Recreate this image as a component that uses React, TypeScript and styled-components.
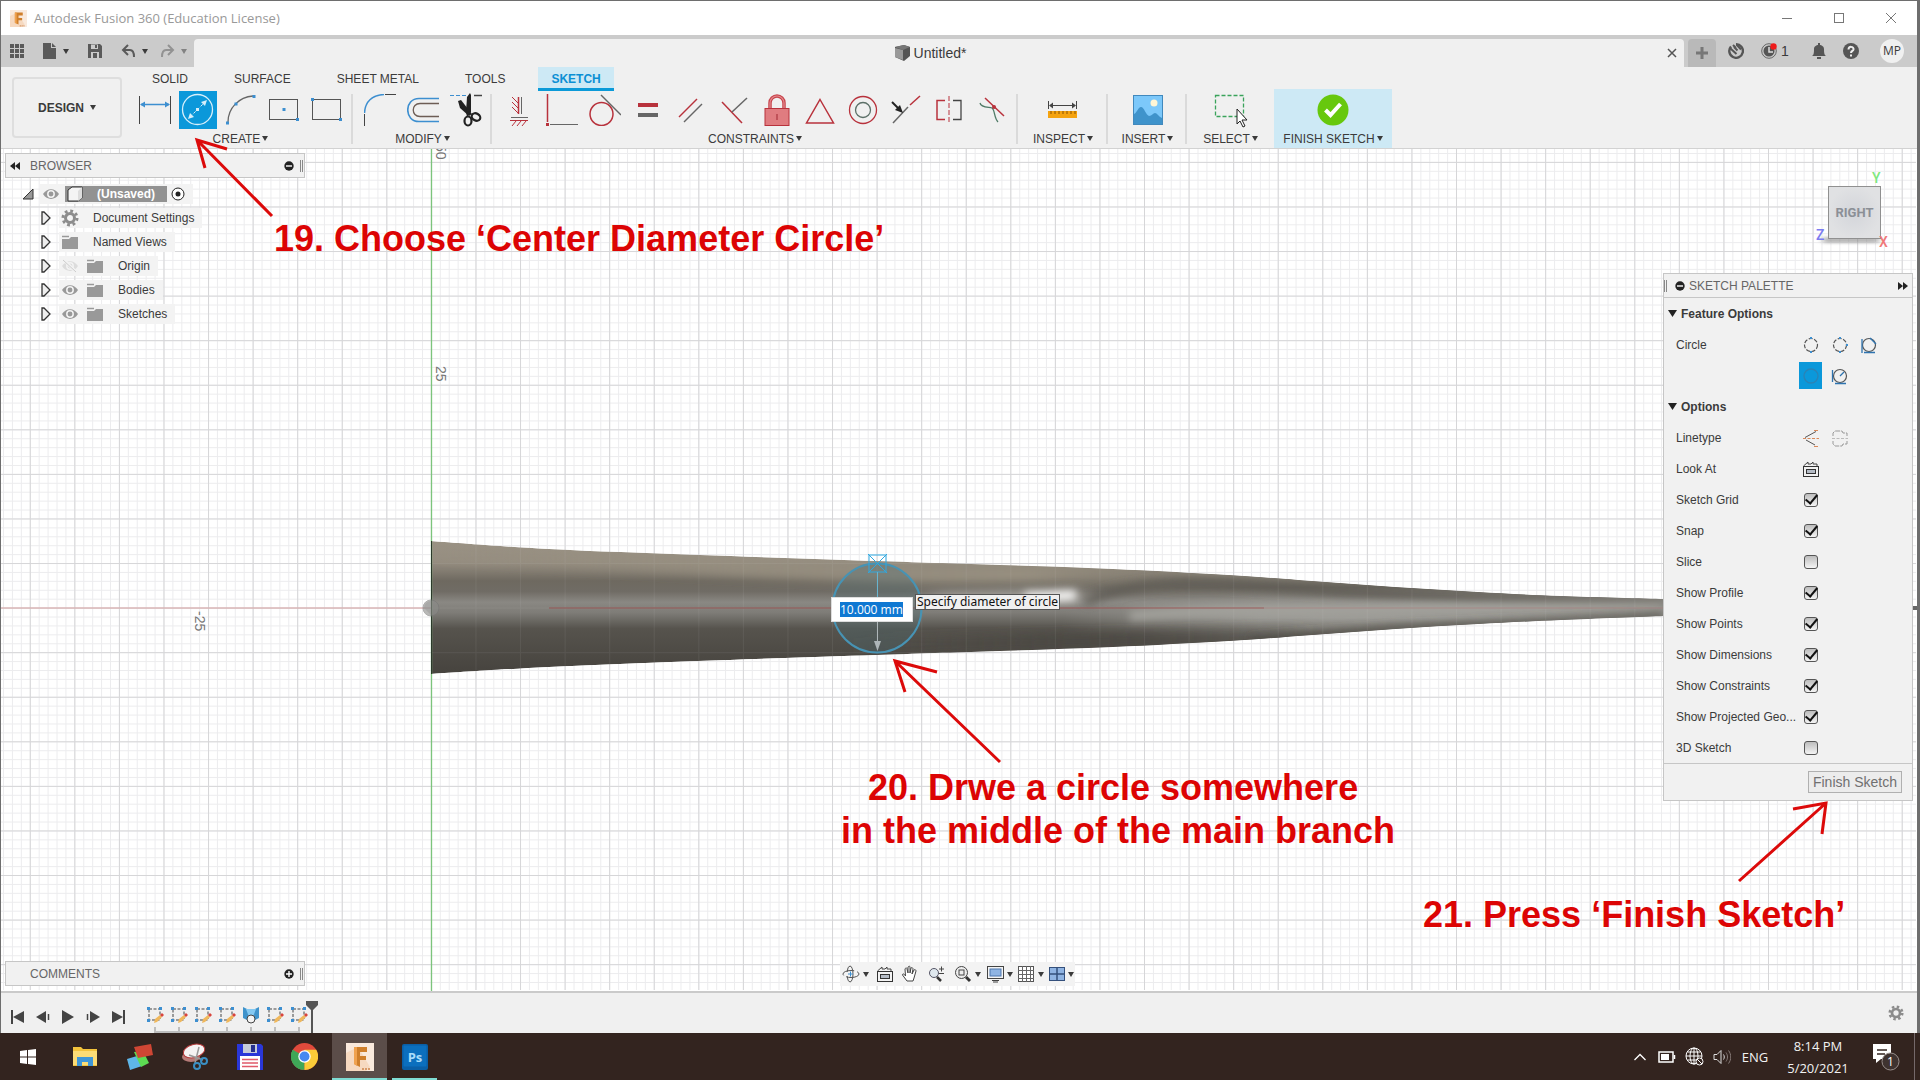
import React from "react";
import styled, { createGlobalStyle, css } from "styled-components";

const sans = `"Liberation Sans", Arial, sans-serif`;
const humanist = `"Open Sans", "Noto Sans", sans-serif`;

const GlobalStyle = createGlobalStyle`
  * { box-sizing: border-box; }
  body { margin: 0; background: #33241f; font: 12px/16px ${sans}; color: #3b3b3b; }
  button { font: inherit; color: inherit; background: none; border: 0; padding: 0; margin: 0; }
  svg { display: block; flex: none; }
`;

const Desktop = styled.div`
  position: relative;
  min-height: 100vh;
  display: flex;
  flex-direction: column;
  overflow: hidden;
`;

const AppWindow = styled.div`
  flex: 1;
  display: flex;
  flex-direction: column;
  border: solid #6e6e6e;
  border-width: 1px 3px 0 1px;
`;

/* ---------- title bar ---------- */
const TitleBar = styled.header`
  display: flex;
  align-items: center;
  height: 34px;
  padding: 0 0 0 9px;
  background: #fff;
  color: #999;
  font: 13px/18px ${humanist};
`;
const AppTitle = styled.h1`
  flex: 1;
  margin: 0 0 0 7px;
  font: inherit;
`;
const WindowButton = styled.button`
  width: 52px;
  height: 34px;
  display: grid;
  place-items: center;
`;

/* ---------- document tabs ---------- */
const TabStrip = styled.div`
  display: flex;
  align-items: stretch;
  height: 32px;
  background: #cbcbcb;
`;
const QuickAccess = styled.div`
  width: 193px;
  display: flex;
  align-items: center;
  padding-left: 8px;
`;
const QuickButton = styled.button<{ $w: number; $faded?: boolean }>`
  width: ${(p) => p.$w}px;
  height: 32px;
  display: flex;
  align-items: center;
  gap: 6px;
  opacity: ${(p) => (p.$faded ? 0.5 : 1)};
`;
const DocumentTab = styled.div`
  flex: 1;
  margin-top: 4px;
  display: flex;
  align-items: center;
  background: #f0f0f0;
  border-radius: 4px 4px 0 0;
  padding-right: 6px;
`;
const DocumentName = styled.div`
  flex: 1;
  display: flex;
  align-items: center;
  justify-content: center;
  gap: 4px;
  font-size: 14px;
`;
const SmallButton = styled.button`
  width: 12px;
  height: 20px;
  display: grid;
  place-items: center;
`;
const NewTab = styled.button`
  width: 28px;
  margin: 4px 12px 0 4px;
  border-radius: 4px 4px 0 0;
  background: #b9b9b9;
  display: grid;
  place-items: center;
`;
const AccountTools = styled.div`
  width: 189px;
  display: flex;
  align-items: center;
  font-size: 14px;
`;
const ToolSlot = styled.button<{ $w: number }>`
  width: ${(p) => p.$w}px;
  display: flex;
  gap: 4px;
  align-items: center;
`;
const Avatar = styled.button`
  width: 24px;
  height: 24px;
  border-radius: 50%;
  background: #f0f0f0;
  font: 12px/24px ${humanist};
`;

/* ---------- ribbon ---------- */
const Ribbon = styled.div`
  display: flex;
  height: 82px;
  background: #f0f0f0;
  border-bottom: 1px solid #d2d2d2;
`;
const DesignButton = styled.button`
  width: 110px;
  height: 61px;
  margin: 10px 6px 0 11px;
  border: 2px solid #dedede;
  border-radius: 4px;
  display: flex;
  align-items: center;
  justify-content: center;
  gap: 6px;
  font-weight: bold;
`;
const RibbonBody = styled.div`
  flex: 1;
`;
const WorkspaceTabs = styled.nav`
  display: flex;
  gap: 20px;
  padding-left: 11px;
`;
const WorkspaceTab = styled.button<{ $active?: boolean }>`
  height: 24px;
  padding: 0 13px;
  ${(p) =>
    p.$active &&
    css`
      background: #cde9f5;
      color: #0b8fd4;
      font-weight: bold;
      border-bottom: 3px solid #0b9ad8;
      padding-top: 2px;
    `}
`;
const ToolGroups = styled.div`
  display: flex;
`;
const Group = styled.div<{ $w?: number; $plain?: boolean }>`
  height: 57px;
  width: ${(p) => (p.$w ? p.$w + "px" : "auto")};
  padding: 0 5px;
  position: relative;
  display: flex;
  flex-direction: column;
  align-items: center;
  &::after {
    content: "";
    position: absolute;
    right: 0;
    top: 3px;
    bottom: 4px;
    width: 2px;
    background: ${(p) => (p.$plain ? "transparent" : "#dadada")};
  }
`;
const FinishGroup = styled(Group)`
  height: 59px;
  margin-top: -2px;
  padding-top: 2px;
  background: #cde9f5;
`;
const IconRow = styled.div`
  display: flex;
`;
const Tool = styled.button`
  width: 43px;
  height: 38px;
  display: grid;
  place-items: center;
`;
const GroupLabel = styled.button`
  display: flex;
  align-items: center;
  gap: 2px;
  height: 19px;
  white-space: nowrap;
`;
const Caret = styled.span`
  width: 0;
  height: 0;
  border: solid transparent;
  border-width: 5px 3px 0;
  border-top-color: #3b3b3b;
`;

/* ---------- canvas ---------- */
const Canvas = styled.main`
  position: relative;
  flex: 1;
  min-height: 842px;
  background: #fff;
  display: flex;
  justify-content: space-between;
`;
const Scene = styled.svg`
  position: absolute;
  inset: 0;
  width: 100%;
  height: 100%;
`;
const LeftDock = styled.aside`
  position: relative;
  width: 300px;
  margin: 4px 0 5px 4px;
  display: flex;
  flex-direction: column;
`;
const PanelBar = styled.div`
  display: flex;
  align-items: center;
  height: 25px;
  padding: 0 1px 0 4px;
  background: #f1f1f1;
  border: 1px solid #c6c6c6;
  color: #666;
`;
const PanelTitle = styled.h2<{ $indent: number }>`
  flex: 1;
  margin: 0 0 0 ${(p) => p.$indent}px;
  font: inherit;
`;
const Grip = styled.span<{ $gap?: number }>`
  width: 3px;
  height: 12px;
  border: solid #888;
  border-width: 0 1px;
  margin-left: ${(p) => p.$gap ?? 0}px;
`;
const Tree = styled.ul`
  list-style: none;
  flex: 1;
  margin: 4px 0 0;
  padding: 0;
`;
const Node = styled.li<{ $indent: number; $gap: number }>`
  height: 24px;
  display: flex;
  align-items: center;
  padding-left: ${(p) => p.$indent}px;
  gap: ${(p) => p.$gap}px;
`;
const NodeBody = styled.span`
  height: 20px;
  padding: 0 8px 0 2px;
  display: flex;
  align-items: center;
  background: #f3f3f3;
`;
const NodeIcon = styled.span<{ $w?: number }>`
  width: ${(p) => p.$w ?? 25}px;
  display: flex;
`;
const NodeText = styled.span`
  padding-left: 7px;
`;
const RootName = styled.span`
  display: flex;
  align-items: center;
  width: 102px;
  height: 16px;
  margin-right: 4px;
  padding-left: 2px;
  gap: 14px;
  background: #929292;
  color: #fff;
  font-weight: bold;
`;

const NavBar = styled.div`
  position: absolute;
  left: 50%;
  bottom: 5px;
  margin-left: -119px;
  display: flex;
  align-items: center;
  height: 24px;
  padding-left: 2px;
  background: #f3f3f3;
`;
const NavButton = styled.button<{ $w: number }>`
  width: ${(p) => p.$w}px;
  display: flex;
  align-items: center;
  gap: 3px;
`;

const RightDock = styled.aside`
  position: relative;
  width: 250px;
  margin: 11px 4px 0 0;
  display: flex;
  flex-direction: column;
  align-items: flex-end;
`;
const ViewCube = styled.svg`
  margin: 0 16px 20px 0;
`;
const Palette = styled.section`
  width: 100%;
  background: #f1f1f1;
  border: 1px solid #c6c6c6;
`;
const PaletteHead = styled.div`
  height: 24px;
  display: flex;
  align-items: center;
  padding-right: 4px;
  border-bottom: 1px solid #c6c6c6;
  color: #666;
`;
const PaletteMark = styled.span`
  margin: 0 4px 0 8px;
`;
const PaletteSection = styled.h3`
  height: 31px;
  margin: 0;
  padding-left: 4px;
  display: flex;
  align-items: center;
  gap: 4px;
  font: bold 12px/16px ${sans};
`;
const PaletteRow = styled.div`
  height: 31px;
  display: flex;
  align-items: center;
  padding-left: 12px;
`;
const PaletteLabel = styled.label`
  width: 123px;
  flex: none;
  white-space: nowrap;
`;
const PaletteTool = styled.button<{ $on?: boolean }>`
  width: 23px;
  height: 27px;
  margin-right: 6px;
  display: grid;
  place-items: center;
  background: ${(p) => (p.$on ? "#0b98da" : "transparent")};
`;
const Check = styled.input`
  appearance: none;
  width: 14px;
  height: 14px;
  margin: 0 0 0 5px;
  border: 1px solid #555;
  border-radius: 3px;
  background: linear-gradient(#bdbdbd, #f4f4f4);
  display: grid;
  place-items: center;
  &:checked::after {
    content: "";
    width: 5px;
    height: 10px;
    margin-top: -3px;
    border: solid #111;
    border-width: 0 2px 2px 0;
    transform: rotate(40deg);
  }
`;
const PaletteFoot = styled.div`
  height: 37px;
  padding-right: 10px;
  display: flex;
  align-items: center;
  justify-content: flex-end;
  border-top: 1px solid #c6c6c6;
`;
const FinishButton = styled.button`
  height: 22px;
  padding: 0 4px;
  border: 1px solid #b0b0b0;
  background: #ececec;
  color: #707070;
  font-size: 14px;
`;

const DiameterBox = styled.label`
  position: absolute;
  left: 830px;
  top: 448px;
  padding: 4px 9px 4px 8px;
  background: #fff;
  border: 1px solid #ddd;
  display: flex;
`;
const DiameterInput = styled.input`
  width: 63px;
  height: 15px;
  padding: 0;
  border: 0;
  background: #0f78d2;
  color: #fff;
  font: 12px/15px ${humanist};
`;
const Tip = styled.div`
  position: absolute;
  left: 914px;
  top: 445px;
  height: 16px;
  padding: 0 1px;
  border: 1px solid #555;
  background: #f0f0f0;
  color: #111;
  font: 12px/14px "Noto Sans", sans-serif;
  white-space: nowrap;
`;
const Note = styled.p<{ $x: number; $y: number }>`
  position: absolute;
  left: ${(p) => p.$x}px;
  top: ${(p) => p.$y}px;
  margin: 0;
  color: #dc0404;
  font: bold 36px/43px ${sans};
  text-align: center;
  white-space: nowrap;
`;
const Arrows = styled.svg`
  position: absolute;
  inset: 0;
  width: 100%;
  height: 100%;
  pointer-events: none;
`;

/* ---------- timeline ---------- */
const Timeline = styled.footer`
  display: flex;
  align-items: center;
  height: 42px;
  padding: 0 13px 0 4px;
  background: #f0f0f0;
  border-top: 2px solid #cacaca;
`;
const PlayButton = styled.button`
  width: 25px;
  height: 30px;
  margin-top: 7px;
  display: grid;
  place-items: center;
`;
const Features = styled.div`
  flex: 1;
  display: flex;
  align-self: flex-end;
  align-items: flex-end;
  margin-left: 13px;
`;
const Feature = styled.button<{ $first?: boolean; $last?: boolean }>`
  width: 24px;
  height: 27px;
  display: flex;
  flex-direction: column;
  align-items: center;
  justify-content: space-between;
  background: linear-gradient(#bdbdbd, #bdbdbd) no-repeat ${(p) => (p.$first ? "right" : "left")} bottom /
    ${(p) => (p.$first || p.$last ? "12px" : "24px")} 2px;
`;
const Tick = styled.span`
  width: 2px;
  height: 6px;
  background: #bdbdbd;
`;
const Marker = styled.svg`
  margin-left: -5px;
`;

/* ---------- taskbar ---------- */
const Taskbar = styled.div`
  height: 47px;
  display: flex;
  background: #33241f;
  color: #f2f2f2;
  font: 14px/22px ${humanist};
`;
const TaskButton = styled.button<{ $w?: number; $active?: boolean }>`
  width: ${(p) => p.$w ?? 55}px;
  height: 47px;
  display: grid;
  place-items: center;
  background: ${(p) => (p.$active ? "#5b4d49" : "transparent")};
`;
const RunningButton = styled(TaskButton)<{ $inset: number }>`
  position: relative;
  &::after {
    content: "";
    position: absolute;
    left: ${(p) => p.$inset}px;
    right: ${(p) => p.$inset}px;
    bottom: 0;
    height: 2px;
    background: #7fdcd3;
  }
`;
const Tray = styled.div`
  margin-left: auto;
  display: flex;
  align-items: center;
  padding-right: 5px;
`;
const TrayIcon = styled.button<{ $w: number }>`
  width: ${(p) => p.$w}px;
  display: grid;
  place-items: center;
`;
const Language = styled.button`
  width: 40px;
  font: 13px/22px ${humanist};
`;
const Clock = styled.time`
  width: 86px;
  text-align: center;
  font: 13px/22px ${humanist};
`;
const ShowDesktop = styled.button`
  width: 1px;
  height: 47px;
  margin-left: 3px;
  background: #75696a;
`;

/* ---------- drawings ---------- */
const R = "#b8323c";
const G = "#666";
const B = "#3d8fd0";

type IconProps = { w?: number; h?: number; children: React.ReactNode };
const Icon = ({ w = 32, h = 32, children }: IconProps) => (
  <svg width={w} height={h} viewBox={`0 0 ${w} ${h}`} fill="none">
    {children}
  </svg>
);

const FusionLogo = ({ size }: { size: number }) => (
  <svg width={size} height={size} viewBox="0 0 28 28">
    <rect width="28" height="28" fill="#f9e9dc" />
    <path d="M0 28V10l12-6 12 20-4 4z" fill="#f3cfae" opacity=".6" />
    <path d="M8 4h13v5h-7v4h6v4h-6v7l-6-3z" fill="#cf7f2b" />
    <path d="M8 4h3v19l-3-2z" fill="#f0a24f" />
    <path d="M16 26h9" stroke="#d79a6a" strokeWidth="2" strokeDasharray="2 1" />
  </svg>
);

const dot = (x: number, y: number) => <rect x={x - 1.5} y={y - 1.5} width="3" height="3" fill={B} />;

const createTools: [string, React.ReactNode][] = [
  ["Sketch Dimension", <Icon key="i"><path d="M.5 2v28M31.500 2v28" stroke="#444" /><path d="M2 10.500h28" stroke={B} strokeWidth="1.500" /><path d="M1 10.500l5-3v6zM31 10.500l-5-3v6z" fill={B} /></Icon>],
  ["Center Diameter Circle", <Icon key="i" w={38} h={38}><rect width="38" height="38" fill="#0b98da" /><circle cx="18.500" cy="18.500" r="15" stroke="#d5eefa" strokeWidth="1.300" /><path d="M11 26L26 11" stroke="#d5eefa" strokeDasharray="3 2" /><path d="M9 28l2-6 4 4zM28 9l-2 6-4-4z" fill="#d5eefa" /><rect x="17" y="17" width="3" height="3" fill="#d5eefa" /></Icon>],
  ["3-Point Arc", <Icon key="i"><path d="M3 28C3 14 14 3 28 2" stroke="#666" strokeWidth="1.300" />{dot(2.500, 29)}{dot(11, 10)}{dot(29, 2.500)}</Icon>],
  ["Center Rectangle", <Icon key="i"><rect x="1.500" y="5.500" width="28" height="20" stroke="#555" />{dot(16, 15.500)}{dot(29.500, 25.500)}</Icon>],
  ["2-Point Rectangle", <Icon key="i"><rect x="1.500" y="5.500" width="28" height="20" stroke="#555" />{dot(1.500, 5.500)}{dot(29.500, 25.500)}</Icon>],
];

const modifyTools: [string, React.ReactNode][] = [
  ["Fillet", <Icon key="i"><path d="M.5 32V20" stroke="#444" /><path d="M.5 19C1 8 8 1 20 .5" stroke={B} strokeWidth="1.500" /><path d="M21 .5h11" stroke="#444" /></Icon>],
  ["Offset", <Icon key="i"><path d="M32 4.500H12C-3 4.500-3 27.500 12 27.500H32" stroke={B} strokeWidth="1.600" /><path d="M32 9.500H13c-9 0-9 13 0 13h19" stroke="#6d5d55" strokeWidth="1.300" /></Icon>],
  ["Trim", <Icon key="i" h={34}><path d="M0 2.500h16" stroke={B} strokeDasharray="4 2" /><path d="M24 2.500h8" stroke="#444" strokeWidth="1.500" /><path d="M8 8l3-1 11 14-3 2-9-8z" fill="#222" /><path d="M17 4l3-4 1 2v17l-4 5-1-5z" fill="#222" /><ellipse cx="18" cy="28" rx="3.500" ry="4.500" stroke="#222" strokeWidth="2.200" fill="#f0f0f0" /><ellipse cx="26" cy="24" rx="4.500" ry="3.500" stroke="#222" strokeWidth="2.200" fill="#f0f0f0" transform="rotate(30 26 24)" /></Icon>],
];

const constraintTools: [string, React.ReactNode][] = [
  ["Horizontal/Vertical", <Icon key="i"><path d="M15.500 3v17" stroke={R} strokeWidth="1.500" /><path d="M18.500 3v17M8 23.500h17" stroke={G} /><path d="M9 3l6 6M9 8l6 6M9 13l6 6M7 26.500h18M13 27l-4 5M18 27l-4 5M23 27l-4 5" stroke={R} /></Icon>],
  ["Coincident", <Icon key="i"><path d="M1.500 0v28" stroke={R} strokeWidth="1.500" /><path d="M4 30.500h28" stroke={G} /><rect y="29" width="3" height="3" fill={R} /></Icon>],
  ["Tangent", <Icon key="i"><circle cx="12.500" cy="20" r="11.500" stroke={R} strokeWidth="1.500" /><path d="M12 1l20 20" stroke={G} strokeWidth="1.500" /></Icon>],
  ["Equal", <Icon key="i"><path d="M6 11h20" stroke={R} strokeWidth="4" /><path d="M6 21h20" stroke={G} strokeWidth="4" /></Icon>],
  ["Parallel", <Icon key="i"><path d="M4 23L22 5" stroke={R} strokeWidth="1.500" /><path d="M9 28L27 10" stroke={G} strokeWidth="1.500" /></Icon>],
  ["Perpendicular", <Icon key="i"><path d="M4 8l20 21" stroke={R} strokeWidth="1.500" /><path d="M14 18L29 4" stroke={G} strokeWidth="1.500" /></Icon>],
  ["Fix/Unfix", <Icon key="i"><path d="M9 15V9a7 7 0 0114 0v6" stroke="#c8454d" strokeWidth="3.500" /><path d="M9 15V9a7 7 0 0114 0v6" stroke="#e58c90" strokeWidth="1.200" /><rect x="4" y="14.500" width="24" height="17" fill="#e07c80" stroke="#b8323c" /><path d="M16 20v6" stroke="#a02832" /></Icon>],
  ["MidPoint", <Icon key="i"><path d="M16 5.500L29.500 29h-27z" stroke={R} strokeWidth="1.500" /></Icon>],
  ["Concentric", <Icon key="i"><circle cx="16" cy="16" r="13.500" stroke={R} strokeWidth="1.300" /><circle cx="16" cy="16" r="7.500" stroke="#5c7068" strokeWidth="1.300" /></Icon>],
  ["Collinear", <Icon key="i"><path d="M3 29l15-16" stroke={G} strokeWidth="1.500" /><path d="M20 11L30 2" stroke={R} strokeWidth="1.500" /><path d="M2 8l8 8" stroke="#222" strokeWidth="2" /><path d="M13 19l-8-3 5-5z" fill="#222" /></Icon>],
  ["Symmetry", <Icon key="i"><path d="M12 6.500H4v19h8" stroke={R} strokeWidth="1.500" /><path d="M20 6.500h8v19h-8" stroke="#444" strokeWidth="1.300" /><path d="M16 2v28" stroke={R} strokeDasharray="5 2" /></Icon>],
  ["Curvature", <Icon key="i"><path d="M9 4l19 18" stroke={R} strokeWidth="1.500" /><path d="M4 9c1 5 9 4 12 5 3 2 2 10 6 14" stroke="#4f7a66" strokeWidth="1.300" /><circle cx="18" cy="13" r="2" fill={R} /></Icon>],
];

const InspectIcon = () => (
  <Icon><path d="M1.500 7v8M29.500 7v8M3 11.500h25" stroke="#444" /><path d="M2 11.500l4-3v6zM29 11.500l-4-3v6z" fill="#444" /><rect x="1" y="17" width="29" height="7" fill="#f5a30f" /><path d="M4 17v3M8 17v3M12 17v3M16 17v3M20 17v3M24 17v3M28 17v3" stroke="#8a5200" /></Icon>
);
const InsertIcon = () => (
  <Icon><rect x="1.500" y="1.500" width="29" height="29" fill="#7cc8fa" stroke="#4189bd" /><path d="M2 20c3-1 4-7 7-7s5 8 8 9c3 0 4-3 6-3s3 3 7 5v6H2z" fill="#3f93cb" /><circle cx="22" cy="9" r="3.500" fill="#fff6d6" /></Icon>
);
const SelectIcon = () => (
  <Icon w={36} h={36}><rect x="2.500" y="3.500" width="28" height="21" stroke="#3aa35b" strokeWidth="1.300" strokeDasharray="4 2" /><path d="M24 17v15l3-3 3 6 2-1-3-6h5z" fill="#fff" stroke="#222" /></Icon>
);
const FinishIcon = () => (
  <Icon><circle cx="16" cy="16" r="15.500" fill="#67c80d" /><path d="M8.500 16l5 5 10-11" stroke="#fff" strokeWidth="4" /></Icon>
);

const MenuLabel = ({ text }: { text: string }) => (
  <GroupLabel>
    {text}
    <Caret />
  </GroupLabel>
);

const Eye = ({ off }: { off?: boolean }) => (
  <Icon w={18} h={14}>
    <g opacity={off ? 0.25 : 1}>
      <path d="M1 7c4-6.500 12-6.500 16 0-4 6.500-12 6.500-16 0z" fill="#999" />
      <circle cx="9" cy="7" r="3.200" fill="#999" stroke="#f3f3f3" strokeWidth="1.500" />
    </g>
    {off && <path d="M3 1l12 12" stroke="#f3f3f3" strokeWidth="3" />}
    {off && <path d="M2 1l13 12" stroke="#ccc" />}
  </Icon>
);
const Folder = () => (
  <Icon w={18} h={14}><path d="M1 4h7l2-2h7v12H1z" fill="#999" /><path d="M1 1.500h7" stroke="#999" strokeWidth="1.500" /></Icon>
);
const Gear = ({ size = 18 }: { size?: number }) => (
  <svg width={size} height={size} viewBox="0 0 18 18" fill="none">
    <circle cx="9" cy="9" r="4.500" stroke="#8c8c8c" strokeWidth="3" />
    <circle cx="9" cy="9" r="7" stroke="#8c8c8c" strokeWidth="3" strokeDasharray="2.750 2.750" />
  </svg>
);
const Expander = () => (
  <Icon w={10} h={14}><path d="M1 1h2l6 6-6 6H1z" fill="#eee" stroke="#333" strokeWidth="1.300" /></Icon>
);
const RoundMark = ({ plus }: { plus?: boolean }) => (
  <Icon w={10} h={10}><circle cx="5" cy="5" r="4.700" fill="#222" /><path d={plus ? "M2 5h6M5 2v6" : "M2 5h6"} stroke="#fff" strokeWidth="1.400" /></Icon>
);
const DoubleArrow = ({ right }: { right?: boolean }) => (
  <Icon w={10} h={8}><path d={right ? "M0 0l5 4-5 4zM5 0l5 4-5 4z" : "M5 0L0 4l5 4zM10 0L5 4l5 4z"} fill="#222" /></Icon>
);
const LookAt = () => (
  <Icon w={18} h={18}><rect x="1.500" y="6.500" width="15" height="10" stroke="#333" /><rect x="4.500" y="9.500" width="9" height="4" fill="#b5bcc6" stroke="#333" /><path d="M1.500 6l4.500-4v2h3l2-2v2h4v2" stroke="#444" /></Icon>
);

const treeItems = [
  { name: "Document Settings", icons: [<Gear key="g" />] },
  { name: "Named Views", icons: [<Folder key="f" />] },
  { name: "Origin", icons: [<Eye key="e" off />, <Folder key="f" />] },
  { name: "Bodies", icons: [<Eye key="e" />, <Folder key="f" />] },
  { name: "Sketches", icons: [<Eye key="e" />, <Folder key="f" />] },
];

const paletteChecks: [string, boolean][] = [
  ["Sketch Grid", true],
  ["Snap", true],
  ["Slice", false],
  ["Show Profile", true],
  ["Show Points", true],
  ["Show Dimensions", true],
  ["Show Constraints", true],
  ["Show Projected Geo...", true],
  ["3D Sketch", false],
];

const SketchFeature = () => (
  <Icon w={18} h={18}><rect x="3" y="3" width="11" height="11" stroke="#444" strokeDasharray="3 1.500" /><path d="M1 1h3v3H1zM13 1h3v3h-3zM1 13h3v3H1z" fill={B} /><path d="M8 17l1-4 5-4 2 2-5 5z" fill="#f0b85c" /><path d="M14 9l2-2 2 2-2 2z" fill="#d8443c" /></Icon>
);
const LoftFeature = () => (
  <Icon w={18} h={18}><path d="M1 1l4 2h8l4-2v11l-4 2H5l-4-2z" fill="#3f93cb" /><path d="M4 3h10l-3 8H7z" fill="#84c9f2" /><circle cx="9" cy="13" r="4" fill="#f4f4f4" stroke="#444" /></Icon>
);

type Point = [number, number];

/* Catmull-Rom spline through the points, as cubic Bezier segments. */
const spline = (pts: Point[]) =>
  pts
    .slice(1)
    .map((p, i) => {
      const a = pts[i];
      const before = pts[i - 1] ?? a;
      const after = pts[i + 2] ?? p;
      return `C${a[0] + (p[0] - before[0]) / 6} ${a[1] + (p[1] - before[1]) / 6} ${p[0] - (after[0] - a[0]) / 6} ${
        p[1] - (after[1] - a[1]) / 6
      } ${p[0]} ${p[1]}`;
    })
    .join("");

const topEdge: Point[] = [[431, 541], [549, 549], [700, 555], [877, 561], [1000, 565], [1113, 569], [1229, 575], [1312, 581], [1395, 587], [1478, 592], [1561, 596], [1664, 599]];
const bottomEdge: Point[] = [[1664, 616], [1561, 620], [1478, 624], [1395, 629], [1312, 635], [1229, 641], [1113, 647], [1000, 651], [877, 655], [698, 661], [549, 667], [431, 674]];
const outline = `M431 541${spline(topEdge)}L1664 616${spline(bottomEdge)}Z`;

const CanvasScene = () => (
  <Scene aria-hidden="true">
    <defs>
      <pattern id="minor" width="8.914" height="8.914" patternUnits="userSpaceOnUse" x="430.900" y="607.600">
        <path d="M0 .5h8.914M.5 0v8.914" stroke="#ececee" />
      </pattern>
      <pattern id="major" width="44.570" height="44.570" patternUnits="userSpaceOnUse" x="430.900" y="607.600">
        <path d="M0 .5h44.570M.5 0v44.570" stroke="#d6d6d8" />
      </pattern>
      <linearGradient id="metal" x1="0" x2="0" y1="541" y2="674" gradientUnits="userSpaceOnUse">
        <stop offset="0" stopColor="#9a9284" />
        <stop offset=".16" stopColor="#958d80" />
        <stop offset=".3" stopColor="#6e6960" />
        <stop offset=".38" stopColor="#706c65" />
        <stop offset=".46" stopColor="#8a8883" />
        <stop offset=".54" stopColor="#7e7c77" />
        <stop offset=".66" stopColor="#56534d" />
        <stop offset="1" stopColor="#46433e" />
      </linearGradient>
      <linearGradient id="taper" x1="0" x2="0" y1="574" y2="641" gradientUnits="userSpaceOnUse">
        <stop offset="0" stopColor="#8b8579" />
        <stop offset=".2" stopColor="#6a665e" />
        <stop offset=".4" stopColor="#8f8d88" />
        <stop offset=".65" stopColor="#9b9a95" />
        <stop offset=".8" stopColor="#85837d" />
        <stop offset="1" stopColor="#5c5953" />
      </linearGradient>
      <linearGradient id="fade" x1="1060" x2="1260" y1="0" y2="0" gradientUnits="userSpaceOnUse">
        <stop offset="0" stopColor="#000" />
        <stop offset="1" stopColor="#fff" />
      </linearGradient>
      <linearGradient id="lightBand" x1="431" x2="1180" y1="0" y2="0" gradientUnits="userSpaceOnUse">
        <stop offset="0" stopColor="#978f80" stopOpacity="0" />
        <stop offset=".4" stopColor="#978f80" stopOpacity=".8" />
        <stop offset=".8" stopColor="#978f80" />
        <stop offset="1" stopColor="#978f80" stopOpacity="0" />
      </linearGradient>
      <linearGradient id="darkBand" x1="850" x2="1300" y1="0" y2="0" gradientUnits="userSpaceOnUse">
        <stop offset="0" stopColor="#4b4843" stopOpacity="0" />
        <stop offset=".5" stopColor="#4b4843" />
        <stop offset="1" stopColor="#4b4843" stopOpacity=".2" />
      </linearGradient>
      <mask id="taperMask" maskUnits="userSpaceOnUse" x="1000" y="520" width="700" height="180">
        <rect x="1000" y="520" width="700" height="180" fill="url(#fade)" />
      </mask>
      <filter id="soft" filterUnits="userSpaceOnUse" x="400" y="500" width="1300" height="220">
        <feGaussianBlur stdDeviation="4" />
      </filter>
      <filter id="softer" filterUnits="userSpaceOnUse" x="400" y="500" width="1300" height="220">
        <feGaussianBlur stdDeviation="12 5" />
      </filter>
      <clipPath id="body">
        <path d={outline} />
      </clipPath>
    </defs>
    <g transform="translate(-1 -149)">
      <rect x="0" y="148" width="100%" height="100%" fill="url(#minor)" />
      <rect x="0" y="148" width="100%" height="100%" fill="url(#major)" />
      <path d="M0 608h431" stroke="#d9a3a3" />
      <g clipPath="url(#body)">
        <path d={outline} fill="url(#metal)" />
        <path d={outline} fill="url(#taper)" mask="url(#taperMask)" />
        <path d="M431 552C600 560 850 576 980 574S1120 575 1180 580" stroke="url(#lightBand)" strokeWidth="18" fill="none" filter="url(#softer)" />
        <path d="M850 646C1000 642 1100 644 1300 632" stroke="url(#darkBand)" strokeWidth="16" fill="none" filter="url(#softer)" />
        <path d="M1085 602C1130 580 1200 581 1290 588S1500 600 1664 603" stroke="#5f5b54" strokeWidth="8" fill="none" filter="url(#soft)" />
        <path d="M1130 616C1220 608 1300 611 1400 609S1560 607 1664 607" stroke="#a5a49f" strokeWidth="9" fill="none" filter="url(#soft)" />
        <path d="M1250 641L1395 629L1664 616" stroke="#4b4843" strokeWidth="6" fill="none" filter="url(#soft)" />
        <path d="M930 598C980 596 1030 596 1080 594" stroke="#a5a29c" strokeWidth="10" fill="none" filter="url(#softer)" />
        <path d="M1025 597C1045 597 1060 596 1076 595" stroke="#fff" strokeWidth="9" fill="none" filter="url(#soft)" />
        <rect x="431" y="540" width="1240" height="140" fill="url(#major)" opacity=".08" />
      </g>
      <path d="M549 608h715" stroke="#9a4646" opacity=".8" />
      <path d="M1264 608h400" stroke="#a67474" opacity=".6" />
      <path d="M431.500 148v843" stroke="#7cc47c" strokeWidth="1.300" />
      <path d="M431.500 541v133" stroke="#2b3a2b" />
      <circle cx="431" cy="608" r="8" fill="#8a8a88" stroke="#777" opacity=".6" />
      <path d="M424 608a7 7 0 017-7v14" fill="#999" opacity=".5" />
      <circle cx="877" cy="608" r="44.500" fill="#4c6a70" opacity=".35" />
      <circle cx="877" cy="608" r="44.500" stroke="#4793b4" strokeWidth="2" fill="none" />
      <path d="M869 555h17v17h-17zM868 554l19 19M887 554l-19 19" stroke="#2ea8e0" fill="none" />
      <path d="M877.500 572v26" stroke="#67b4cf" />
      <path d="M877.500 620v22" stroke="#aeb6b8" />
      <path d="M874 641h7l-3.500 10z" fill="#aeb6b8" />
      <rect x="1912" y="606" width="6" height="4" fill="#666" />
      <g fill="#777" fontFamily="Liberation Sans, sans-serif" fontSize="14">
        <text transform="translate(436 144) rotate(90)">50</text>
        <text transform="translate(436 366) rotate(90)">25</text>
        <text transform="translate(195 611) rotate(90)">-25</text>
      </g>
    </g>
  </Scene>
);

const dottedCircle = (extra: React.ReactNode, solid?: boolean) => (
  <Icon w={20} h={20}><circle cx="10" cy="10" r="6.500" stroke="#555" strokeWidth="1.200" strokeDasharray={solid ? undefined : "4 1.500"} />{extra}</Icon>
);

const Chrome = () => (
  <svg width="27" height="27" viewBox="0 0 26 26">
    <circle cx="13" cy="13" r="13" fill="#e04a3c" />
    <path d="M13 13L1.700 6.500A13 13 0 0013 26z" fill="#3fa757" />
    <path d="M13 26A13 13 0 0024.300 6.500H13z" fill="#fbcb38" />
    <path d="M1.700 6.500L8 17l5 2-3 6.500A13 13 0 011.700 6.500z" fill="#3fa757" />
    <circle cx="13" cy="13" r="6" fill="#fff" />
    <circle cx="13" cy="13" r="4.800" fill="#4688f0" />
  </svg>
);

export default function App() {
  return (
    <Desktop>
      <GlobalStyle />
      <AppWindow>
        <TitleBar>
          <FusionLogo size={17} />
          <AppTitle>Autodesk Fusion 360 (Education License)</AppTitle>
          <WindowButton aria-label="Minimize"><Icon w={12} h={12}><path d="M1 6.500h10" stroke="#777" /></Icon></WindowButton>
          <WindowButton aria-label="Maximize"><Icon w={12} h={12}><rect x="1.500" y="1.500" width="9" height="9" stroke="#777" /></Icon></WindowButton>
          <WindowButton aria-label="Close"><Icon w={12} h={12}><path d="M1 1l10 10M11 1L1 11" stroke="#777" /></Icon></WindowButton>
        </TitleBar>

        <TabStrip>
          <QuickAccess>
            <QuickButton $w={34} aria-label="Data panel"><Icon w={16} h={16}><path d="M1 1h4v4H1zM6 1h4v4H6zM11 1h4v4h-4zM1 6h4v4H1zM6 6h4v4H6zM11 6h4v4h-4zM1 11h4v4H1zM6 11h4v4H6zM11 11h4v4h-4z" fill="#5a5a5a" /></Icon></QuickButton>
            <QuickButton $w={44} aria-label="File"><Icon w={14} h={16}><path d="M0 0h8v5h5v11H0z" fill="#5a5a5a" /><path d="M9 0l4 4H9z" fill="#5a5a5a" /></Icon><Caret /></QuickButton>
            <QuickButton $w={34} aria-label="Save"><Icon w={16} h={16}><path d="M1 1h12l2 2v12H1z" fill="#5a5a5a" /><path d="M4 1.500h7V6H4zM4 9h8v6H4z" fill="#cbcbcb" /><path d="M8 2h2v3H8zM6 10h4v5H6z" fill="#5a5a5a" /></Icon></QuickButton>
            <QuickButton $w={39} aria-label="Undo"><Icon w={15} h={14}><path d="M3 6h6c3 0 4 3 4 7M7 1L2 6l5 5" stroke="#5a5a5a" strokeWidth="2" /></Icon><Caret /></QuickButton>
            <QuickButton $w={34} $faded aria-label="Redo"><Icon w={15} h={14}><path d="M12 6H6c-3 0-4 3-4 7M8 1l5 5-5 5" stroke="#5a5a5a" strokeWidth="2" /></Icon><Caret /></QuickButton>
          </QuickAccess>
          <DocumentTab>
            <DocumentName>
              <Icon w={16} h={16}><path d="M1 2l9-2 6 2v9l-6 5-9-4z" fill="#555" /><path d="M1 3l8 2v10l-8-3z" fill="#999" /><path d="M1 2l9-2 6 2-7 3z" fill="#777" /></Icon>
              Untitled*
            </DocumentName>
            <SmallButton aria-label="Close document"><Icon w={10} h={10}><path d="M1 1l8 8M9 1L1 9" stroke="#555" strokeWidth="1.500" /></Icon></SmallButton>
          </DocumentTab>
          <NewTab aria-label="New design"><Icon w={14} h={14}><path d="M7 1v12M1 7h12" stroke="#777" strokeWidth="3" /></Icon></NewTab>
          <AccountTools>
            <ToolSlot $w={33} aria-label="Extensions"><Icon w={16} h={16}><path d="M3 3.500A6.800 6.800 0 108 1.200" stroke="#555" strokeWidth="2.400" /><path d="M2.500 5.500l6 5.500M6 4l3.500 3.500M8.500 1.500L13 6.500M5 2l3 3" stroke="#555" strokeWidth="2" /></Icon></ToolSlot>
            <ToolSlot $w={51} aria-label="Job status"><Icon w={16} h={16}><circle cx="8" cy="8" r="7.300" stroke="#666" /><circle cx="8" cy="8" r="5.500" fill="#555" /><path d="M8 4v5h4" stroke="#ddd" strokeWidth="1.500" /><circle cx="12.500" cy="3.500" r="3.200" fill="#ee1c1c" /></Icon>1</ToolSlot>
            <ToolSlot $w={31} aria-label="Notifications"><Icon w={14} h={16}><path d="M0 13c2-1 2-4 2-7 0-3 3-4 4-4V0h2v2c1 0 4 1 4 4 0 3 0 6 2 7z" fill="#555" /><path d="M5 14h4v2H5z" fill="#555" /></Icon></ToolSlot>
            <ToolSlot $w={37} aria-label="Help"><Icon w={16} h={16}><circle cx="8" cy="8" r="8" fill="#555" /><path d="M5.500 6.500c0-4 5.500-3 5 0-.3 1.500-2.500 1.500-2.500 3.500M8 11.500v2" stroke="#eee" strokeWidth="2" /></Icon></ToolSlot>
            <Avatar>MP</Avatar>
          </AccountTools>
        </TabStrip>

        <Ribbon>
          <DesignButton>DESIGN <Caret /></DesignButton>
          <RibbonBody>
            <WorkspaceTabs>
              <WorkspaceTab>SOLID</WorkspaceTab>
              <WorkspaceTab>SURFACE</WorkspaceTab>
              <WorkspaceTab>SHEET METAL</WorkspaceTab>
              <WorkspaceTab>TOOLS</WorkspaceTab>
              <WorkspaceTab $active>SKETCH</WorkspaceTab>
            </WorkspaceTabs>
            <ToolGroups>
              {([["CREATE", createTools], ["MODIFY", modifyTools], ["CONSTRAINTS", constraintTools]] as const).map(([name, tools]) => (
                <Group key={name}>
                  <IconRow>
                    {tools.map(([label, icon]) => (
                      <Tool key={label} aria-label={label}>{icon}</Tool>
                    ))}
                  </IconRow>
                  <MenuLabel text={name} />
                </Group>
              ))}
              <Group $w={90}><Tool aria-label="Measure"><InspectIcon /></Tool><MenuLabel text="INSPECT" /></Group>
              <Group $w={79}><Tool aria-label="Canvas"><InsertIcon /></Tool><MenuLabel text="INSERT" /></Group>
              <Group $w={87} $plain><Tool aria-label="Window selection"><SelectIcon /></Tool><MenuLabel text="SELECT" /></Group>
              <FinishGroup $w={118} $plain><Tool aria-label="Finish"><FinishIcon /></Tool><MenuLabel text="FINISH SKETCH" /></FinishGroup>
            </ToolGroups>
          </RibbonBody>
        </Ribbon>

        <Canvas>
          <CanvasScene />
          <LeftDock>
            <PanelBar>
              <DoubleArrow />
              <PanelTitle $indent={10}>BROWSER</PanelTitle>
              <RoundMark />
              <Grip $gap={6} />
            </PanelBar>
            <Tree>
              <Node $indent={17} $gap={6}>
                <Icon w={12} h={12}><path d="M11 1v10H1z" fill="#999" stroke="#333" /></Icon>
                <NodeBody>
                  <NodeIcon $w={23}><Eye /></NodeIcon>
                  <RootName>
                    <Icon w={16} h={16}><path d="M1 4l4-3h10v11l-4 3H1z" fill="#f4f4f4" stroke="#333" /><path d="M11 5v10l4-3V1z" fill="#ddd" /></Icon>
                    (Unsaved)
                  </RootName>
                  <Icon w={14} h={14}><circle cx="7" cy="7" r="6" stroke="#222" fill="#fff" /><circle cx="7" cy="7" r="2.500" fill="#222" /></Icon>
                </NodeBody>
              </Node>
              {treeItems.map((item) => (
                <Node key={item.name} $indent={36} $gap={8}>
                  <Expander />
                  <NodeBody>
                    {item.icons.map((icon, i) => <NodeIcon key={i}>{icon}</NodeIcon>)}
                    <NodeText>{item.name}</NodeText>
                  </NodeBody>
                </Node>
              ))}
            </Tree>
            <PanelBar>
              <PanelTitle $indent={20}>COMMENTS</PanelTitle>
              <RoundMark plus />
              <Grip $gap={6} />
            </PanelBar>
          </LeftDock>

          <RightDock>
            <ViewCube width="88" height="93" viewBox="1808 160 88 93" aria-label="View cube">
              <defs>
                <radialGradient id="cube"><stop offset="0" stopColor="#d3d5da" /><stop offset="1" stopColor="#e0e1e3" /></radialGradient>
                <filter id="cubeShadow" x="-20%" y="-100%" width="140%" height="300%"><feGaussianBlur stdDeviation="3 1.500" /></filter>
              </defs>
              <rect x="1822" y="237" width="56" height="6" fill="#888" opacity=".6" filter="url(#cubeShadow)" />
              <rect x="1827.500" y="186.500" width="52" height="52" fill="url(#cube)" stroke="#909090" />
              <text x="1853.500" y="217" textAnchor="middle" fill="#8b8f96" fontFamily="Roboto, sans-serif" fontWeight="bold" fontSize="13">RIGHT</text>
              <g fontFamily="Roboto, sans-serif" fontSize="14" fontWeight="500">
                <text x="1871" y="183" fill="#7ee87e">Y</text>
                <text x="1815" y="240" fill="#7c7cf0">Z</text>
                <text x="1878" y="247" fill="#f07878">X</text>
              </g>
            </ViewCube>
            <Palette>
              <PaletteHead>
                <Grip />
                <PaletteMark><RoundMark /></PaletteMark>
                <PanelTitle $indent={0}>SKETCH PALETTE</PanelTitle>
                <DoubleArrow right />
              </PaletteHead>
              <PaletteSection><Icon w={9} h={7}><path d="M0 0h9L4.500 7z" fill="#222" /></Icon>Feature Options</PaletteSection>
              <PaletteRow>
                <PaletteLabel as="span">Circle</PaletteLabel>
                <PaletteTool aria-label="Center circle">{dottedCircle(<path d="M9 2h2v2H9zM9 16h2v2H9z" fill={B} />)}</PaletteTool>
                <PaletteTool aria-label="3-point circle">{dottedCircle(<path d="M9 2h2v2H9zM9 16h2v2H9zM16 9h2v2h-2z" fill={B} />)}</PaletteTool>
                <PaletteTool aria-label="3-tangent circle">{dottedCircle(<path d="M3 4v14M5 17.500h11M11 3l6 6" stroke="#2f74b0" strokeWidth="1.300" />, true)}</PaletteTool>
              </PaletteRow>
              <PaletteRow>
                <PaletteLabel as="span" />
                <PaletteTool $on aria-label="Center diameter circle"><Icon w={20} h={20}><circle cx="10" cy="10" r="7" stroke="#2b83b5" strokeWidth="1.300" /></Icon></PaletteTool>
                <PaletteTool aria-label="2-tangent circle">{dottedCircle(<path d="M2.500 4v12M5 17.500h11M10 10l4-4" stroke="#2f74b0" strokeWidth="1.300" />, true)}</PaletteTool>
              </PaletteRow>
              <PaletteSection><Icon w={9} h={7}><path d="M0 0h9L4.500 7z" fill="#222" /></Icon>Options</PaletteSection>
              <PaletteRow>
                <PaletteLabel as="span">Linetype</PaletteLabel>
                <PaletteTool aria-label="Construction"><Icon w={20} h={20}><path d="M4 9.500l11-6M5 12l9 5" stroke="#555" /><path d="M2 10.500h16" stroke="#d98a5c" strokeDasharray="3 1.500" /><path d="M13 2.500h4M13 18.500h4" stroke="#d98a5c" /></Icon></PaletteTool>
                <PaletteTool aria-label="Centerline"><Icon w={20} h={20}><path d="M3 8V5l2-2h7l1 2h4v3M17 13v3h-4l-1 2H5l-2-2v-3" stroke="#999" strokeDasharray="5 1" /><path d="M2 10.500h16" stroke="#bbb" strokeDasharray="3 1.500" /></Icon></PaletteTool>
              </PaletteRow>
              <PaletteRow>
                <PaletteLabel as="span">Look At</PaletteLabel>
                <PaletteTool aria-label="Look At"><LookAt /></PaletteTool>
              </PaletteRow>
              {paletteChecks.map(([name, on], i) => (
                <PaletteRow key={name}>
                  <PaletteLabel htmlFor={`option-${i}`}>{name}</PaletteLabel>
                  <Check id={`option-${i}`} type="checkbox" defaultChecked={on} />
                </PaletteRow>
              ))}
              <PaletteFoot><FinishButton>Finish Sketch</FinishButton></PaletteFoot>
            </Palette>
          </RightDock>

          <NavBar>
            <NavButton $w={34} aria-label="Orbit"><Icon w={18} h={18}><ellipse cx="9" cy="9" rx="8" ry="3.500" stroke="#555" strokeDasharray="14 3" /><ellipse cx="8" cy="9" rx="3" ry="8" stroke="#555" strokeDasharray="16 4" /><path d="M6 9h5M8.500 6.500v5" stroke={B} /></Icon><Caret /></NavButton>
            <NavButton $w={25} aria-label="Look at"><LookAt /></NavButton>
            <NavButton $w={26} aria-label="Pan"><Icon w={18} h={18}><path d="M6 16L1.500 10c0-2 2-1 3 1L4 4c1-2 2-1 2 0l1 4V2c1-1 2-1 2 0v6l1-5c1-1 2 0 2 1l-1 5 2-4c1-1 2 0 2 1l-2 7-1 3z" fill="#fff" stroke="#444" strokeLinejoin="round" /></Icon></NavButton>
            <NavButton $w={27} aria-label="Zoom"><Icon w={18} h={18}><circle cx="7" cy="8" r="4.500" stroke="#556" fill="#dfe8ee" /><path d="M10 12l4 4" stroke="#333" strokeWidth="2.500" /><path d="M12 4h5M14.500 1.500v5M12 8.500h5" stroke="#444" /></Icon></NavButton>
            <NavButton $w={33} aria-label="Fit"><Icon w={18} h={18}><circle cx="7.500" cy="7.500" r="6" stroke="#444" fill="#eee" /><rect x="5" y="5" width="5" height="5" stroke="#444" /><path d="M12 12l4 4" stroke="#333" strokeWidth="3" /></Icon><Caret /></NavButton>
            <NavButton $w={31} aria-label="Display settings"><Icon w={17} h={18}><rect x=".5" y="1.500" width="16" height="12" fill="#f4f4f4" stroke="#444" /><rect x="3" y="4" width="11" height="7" fill="#8fb4e3" stroke="#4c77ae" /><path d="M5 15.500h7M6 17h5" stroke="#444" /></Icon><Caret /></NavButton>
            <NavButton $w={31} aria-label="Grid and snaps"><Icon w={17} h={18}><rect x=".5" y="1.500" width="15" height="15" fill="#fff" stroke="#555" /><path d="M4.500 1v16M8.500 1v16M12.500 1v16M0 5.500h16M0 9.500h16M0 13.500h16" stroke="#666" /></Icon><Caret /></NavButton>
            <NavButton $w={26} aria-label="Viewports"><Icon w={16} h={18}><rect x=".5" y="2.500" width="15" height="13" fill="#8fb4e3" stroke="#34507c" /><path d="M8 3v12M1 9h14" stroke="#34507c" strokeWidth="1.500" /></Icon><Caret /></NavButton>
          </NavBar>

          <DiameterBox><DiameterInput aria-label="Diameter" defaultValue="10.000 mm" /></DiameterBox>
          <Tip role="tooltip">Specify diameter of circle</Tip>
          <Note $x={273} $y={68}>19. Choose ‘Center Diameter Circle’</Note>
          <Note $x={840} $y={617}>20. Drwe a circle somewhere&nbsp;<br />in the middle of the main branch</Note>
          <Note $x={1422} $y={744}>21. Press ‘Finish Sketch’</Note>
        </Canvas>

        <Timeline>
          <PlayButton aria-label="Go to start"><Icon w={14} h={14}><path d="M1 0v14" stroke="#444" strokeWidth="2" /><path d="M13 1v12L2 7z" fill="#444" /></Icon></PlayButton>
          <PlayButton aria-label="Step back"><Icon w={14} h={14}><path d="M10 1v12L0 7z" fill="#444" /><path d="M12.500 4v6" stroke="#444" strokeWidth="1.500" /></Icon></PlayButton>
          <PlayButton aria-label="Play"><Icon w={14} h={14}><path d="M1 0v14l12-7z" fill="#444" /></Icon></PlayButton>
          <PlayButton aria-label="Step forward"><Icon w={14} h={14}><path d="M4 1v12l10-6z" fill="#444" /><path d="M1.500 4v6" stroke="#444" strokeWidth="1.500" /></Icon></PlayButton>
          <PlayButton aria-label="Go to end"><Icon w={14} h={14}><path d="M13 0v14" stroke="#444" strokeWidth="2" /><path d="M1 1v12l11-6z" fill="#444" /></Icon></PlayButton>
          <Features>
            {[0, 1, 2, 3, 4, 5, 6].map((i) => (
              <Feature key={i} $first={i === 0} $last={i === 6} aria-label={i === 4 ? "Loft" : `Sketch ${i + 1}`}>
                {i === 4 ? <LoftFeature /> : <SketchFeature />}
                <Tick />
              </Feature>
            ))}
            <Marker width="12" height="32" viewBox="0 0 12 32">
              <path d="M0 0h12v4L7 9v23H5V9L0 4z" fill="#555" />
            </Marker>
          </Features>
          <button aria-label="Timeline settings"><Gear size={16} /></button>
        </Timeline>
      </AppWindow>

      <Taskbar>
        <TaskButton $w={57} aria-label="Start"><Icon w={18} h={16}><path d="M0 2l7-1v6.500H0zM8 1l8-1v7.500H8zM0 8.500h7V15l-7-1zM8 8.500h8V16l-8-1z" fill="#fff" /></Icon></TaskButton>
        <TaskButton aria-label="File Explorer"><Icon w={26} h={22}><path d="M1 1h8l2 2h14v17H1z" fill="#f3c33c" /><path d="M1 5h24v14H1z" fill="#fbdc76" /><path d="M5 20v-9h16v9h-5v-4h-6v4z" fill="#3f97d8" /></Icon></TaskButton>
        <TaskButton aria-label="Cards"><Icon w={28} h={28}><path d="M1 16l10-3 5 10-12 4z" fill="#5fb6e8" /><path d="M8 9l9-1 6 12-8 4z" fill="#5ddb52" /><path d="M8 4l17-3 2 11-15 3z" fill="#cf4634" /></Icon></TaskButton>
        <TaskButton aria-label="Snipping Tool"><Icon w={28} h={28}><ellipse cx="10" cy="14" rx="9" ry="5" fill="#b77b78" /><ellipse cx="13" cy="8" rx="11" ry="6.500" fill="#f5f3f3" stroke="#b43a3a" transform="rotate(-15 13 8)" /><path d="M18 4l-4 16M8 12l14 5" stroke="#999" strokeWidth="1.500" /><circle cx="16" cy="23" r="3" stroke="#3a8fc4" strokeWidth="2" /><circle cx="23" cy="18" r="3" stroke="#3a8fc4" strokeWidth="2" /></Icon></TaskButton>
        <TaskButton aria-label="Total Commander"><Icon w={28} h={28}><path d="M1 1h24l2 2v24H1z" fill="#2a37d8" /><path d="M7 1h14v9H7z" fill="#c5cbd8" /><path d="M15 2h4v7h-4z" fill="#26308f" /><path d="M4 13h20v14H4z" fill="#fff" /><path d="M6 16.500h16M6 20h16M6 23.500h16" stroke="#e05a6a" strokeWidth="1.300" /></Icon></TaskButton>
        <TaskButton aria-label="Chrome"><Chrome /></TaskButton>
        <RunningButton $active $inset={0} aria-label="Fusion 360"><FusionLogo size={28} /></RunningButton>
        <RunningButton $inset={5} aria-label="Photoshop">
          <Icon w={26} h={26}>
            <rect width="26" height="26" rx="2" fill="#0a5fa6" />
            <rect x="1.500" y="1.500" width="23" height="21" rx="1" fill="#0b6fbe" />
            <text x="13" y="18" textAnchor="middle" fill="#a9dcfa" fontFamily="Open Sans, sans-serif" fontWeight="bold" fontSize="13">Ps</text>
          </Icon>
        </RunningButton>
        <Tray>
          <TrayIcon $w={26} aria-label="Hidden icons"><Icon w={14} h={10}><path d="M1.500 8L7 2.500 12.500 8" stroke="#fff" strokeWidth="1.300" /></Icon></TrayIcon>
          <TrayIcon $w={28} aria-label="Battery"><Icon w={18} h={12}><rect x="1" y="1" width="14" height="10" stroke="#fff" strokeWidth="1.500" /><rect x="3" y="3" width="8" height="6" fill="#fff" /><path d="M16.500 4v4" stroke="#fff" strokeWidth="1.500" /></Icon></TrayIcon>
          <TrayIcon $w={27} aria-label="Network"><Icon w={19} h={19}><circle cx="9" cy="9" r="8" stroke="#fff" /><ellipse cx="9" cy="9" rx="4" ry="8" stroke="#fff" /><path d="M1 9h16M2.500 5h13M2.500 13h13M9 1v16" stroke="#fff" /><circle cx="14.500" cy="14.500" r="3.500" fill="#33241f" stroke="#fff" /><path d="M12 12l5 5" stroke="#fff" /></Icon></TrayIcon>
          <TrayIcon $w={27} aria-label="Volume"><Icon w={18} h={16}><path d="M1 5.500h3l4-4v13l-4-4H1z" stroke="#ddd" /><path d="M10.500 5.500c1 1.500 1 3.500 0 5" stroke="#ddd" /><path d="M13 3.500c2 3 2 6 0 9M15.500 1.500c3 4 3 9 0 13" stroke="#877b78" /></Icon></TrayIcon>
          <Language>ENG</Language>
          <Clock>8:14 PM<br />5/20/2021</Clock>
          <TrayIcon $w={50} aria-label="Notifications">
            <Icon w={28} h={28}>
              <path d="M1 1h18v15H9l-5 4v-4H1z" fill="#fff" />
              <path d="M5 7h10M5 11h8" stroke="#33241f" strokeWidth="1.300" />
              <circle cx="18.500" cy="18.500" r="8.500" fill="#3f3330" stroke="#998f8c" />
              <text x="18.500" y="23" textAnchor="middle" fill="#fff" fontFamily="Open Sans, sans-serif" fontSize="12">1</text>
            </Icon>
          </TrayIcon>
          <ShowDesktop aria-label="Show desktop" />
        </Tray>
      </Taskbar>

      <Arrows aria-hidden="true">
        <g stroke="#dc0a0a" strokeWidth="3" fill="none">
          <path d="M272 216L197 140M227 149L197 140L205 168" />
          <path d="M1000 762L895 661M937 672L895 661L905 692" />
          <path d="M1739 881L1826 803M1793 809L1826 803L1822 834" />
        </g>
      </Arrows>
    </Desktop>
  );
}
